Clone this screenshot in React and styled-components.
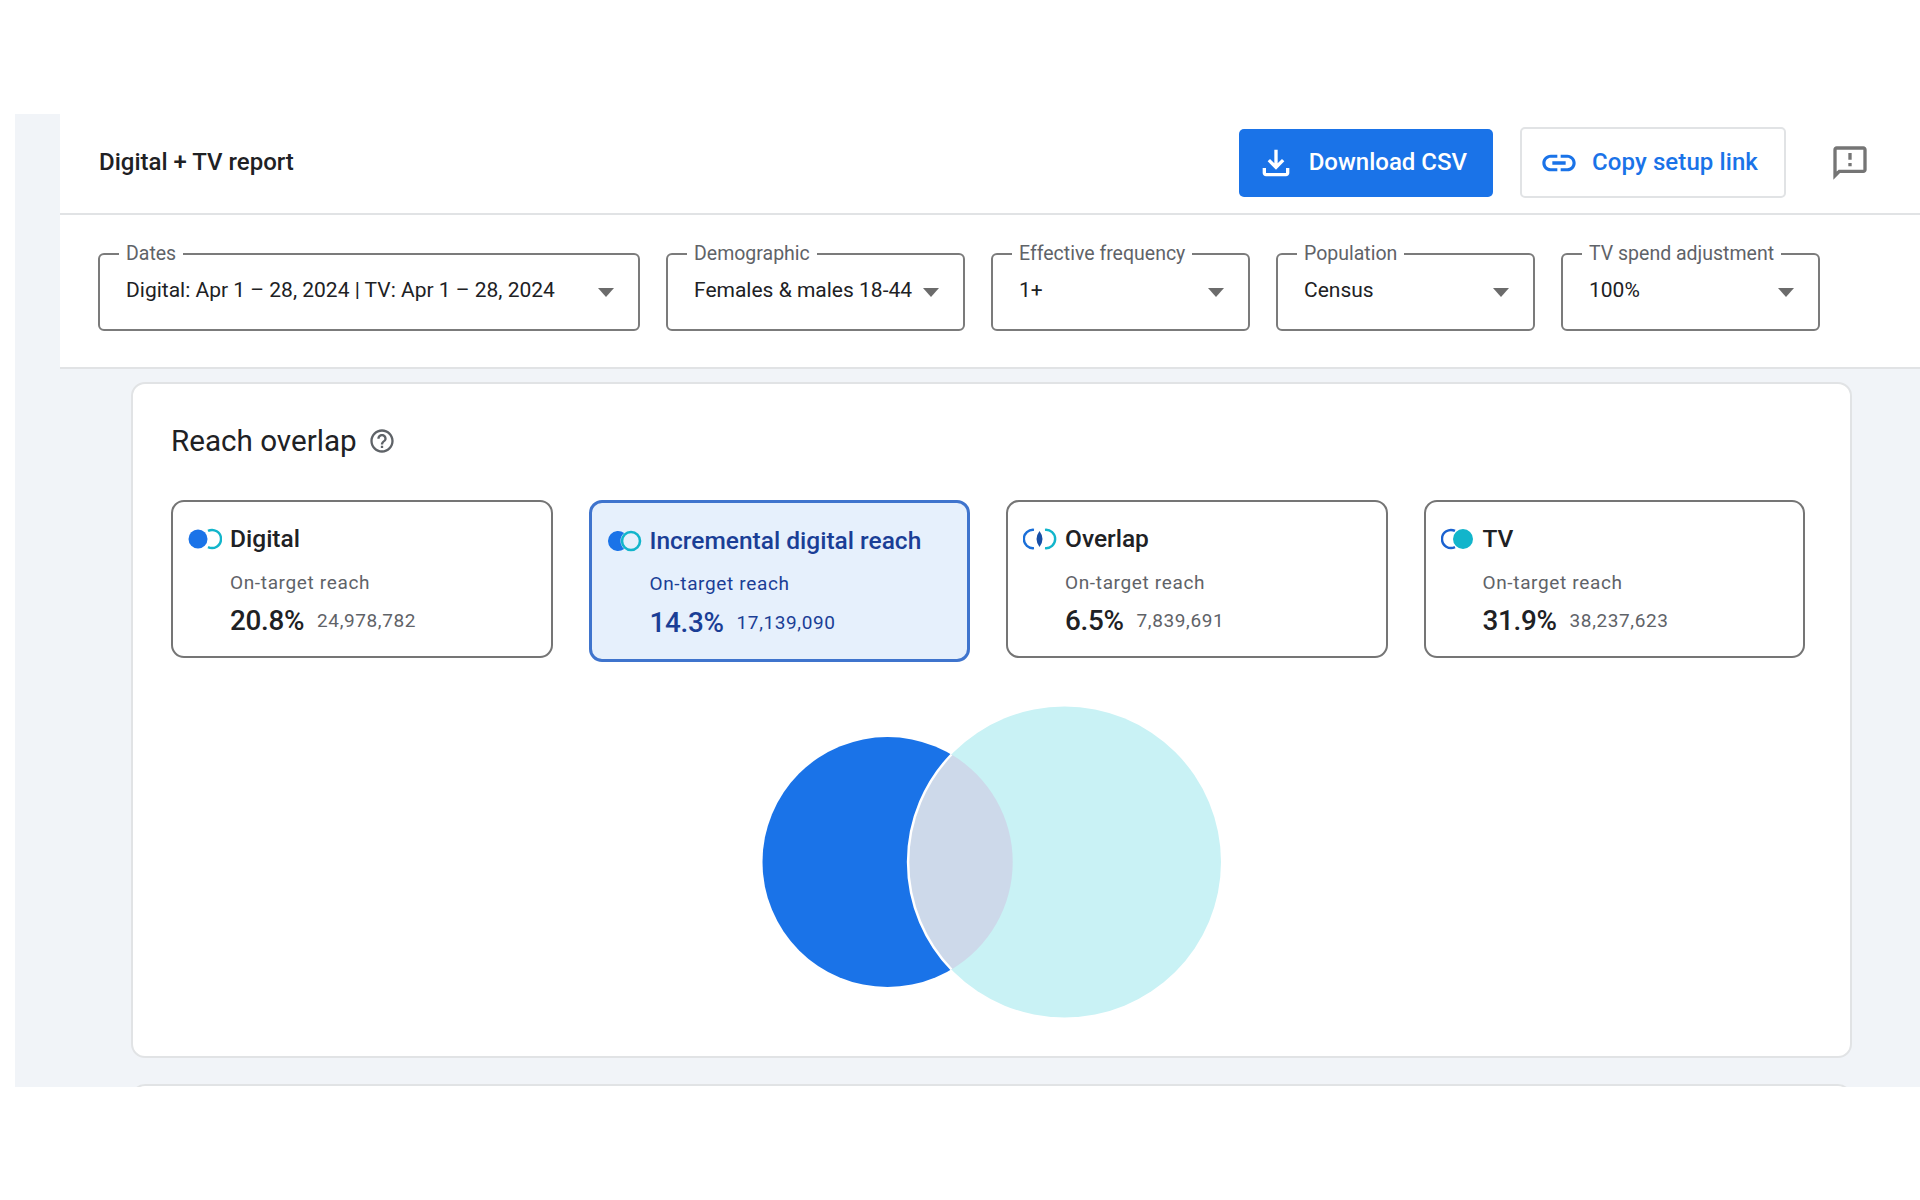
import React from "react";
import styled, { createGlobalStyle } from "styled-components";
import { MdHelpOutline, MdLink, MdOutlineFeedback, MdOutlineFileDownload } from "react-icons/md";

const filters = [
  { label: "Dates", value: "Digital: Apr 1 – 28, 2024 | TV: Apr 1 – 28, 2024", width: 542 },
  { label: "Demographic", value: "Females & males 18-44", width: 299 },
  { label: "Effective frequency", value: "1+", width: 259 },
  { label: "Population", value: "Census", width: 259 },
  { label: "TV spend adjustment", value: "100%", width: 259 },
];

const tiles = [
  { kind: "digital", title: "Digital", percent: "20.8%", count: "24,978,782" },
  { kind: "incremental", title: "Incremental digital reach", percent: "14.3%", count: "17,139,090", selected: true },
  { kind: "overlap", title: "Overlap", percent: "6.5%", count: "7,839,691" },
  { kind: "tv", title: "TV", percent: "31.9%", count: "38,237,623" },
];

function TileIcon({ kind }) {
  return (
    <svg width="34" height="22" viewBox="0 0 34 22" fill="none">
      {kind === "digital" && (
        <>
          <circle cx="10" cy="11" r="9.5" fill="#1a73e8" />
          <path d="M20 2.94A9 9 0 1 1 20 19.06" stroke="#12b5cb" strokeWidth="2.4" />
        </>
      )}
      {kind === "incremental" && (
        <>
          <path d="M16.1 3.08A10 10 0 1 0 16.1 18.92A10.5 10.5 0 0 1 16.1 3.08Z" fill="#1a73e8" />
          <circle cx="23" cy="11" r="9" stroke="#12b5cb" strokeWidth="2.6" />
        </>
      )}
      {kind === "overlap" && (
        <>
          <path d="M11 1.85A9.2 9.2 0 1 0 11 20.15" stroke="#1a6fd8" strokeWidth="2.4" />
          <path d="M22 1.85A9.2 9.2 0 1 1 22 20.15" stroke="#12b5cb" strokeWidth="2.4" />
          <path d="M16.5 3Q22.5 11 16.5 19Q10.5 11 16.5 3Z" fill="#174ea6" />
        </>
      )}
      {kind === "tv" && (
        <>
          <path d="M14 2.94A9 9 0 1 0 14 19.06" stroke="#1a62d0" strokeWidth="2.4" />
          <circle cx="22" cy="11" r="10" fill="#12b5cb" />
        </>
      )}
    </svg>
  );
}

function App() {
  return (
    <>
      <GlobalStyle />
      <Page>
        <Shell>
          <TopPanel>
            <Header>
              <ReportTitle>Digital + TV report</ReportTitle>
              <DownloadButton>
                <MdOutlineFileDownload size={40} />
                <ButtonText>Download CSV</ButtonText>
              </DownloadButton>
              <CopyButton>
                <MdLink size={40} />
                <ButtonText>Copy setup link</ButtonText>
              </CopyButton>
              <FeedbackButton>
                <MdOutlineFeedback size={40} />
              </FeedbackButton>
            </Header>
            <FilterBar>
              {filters.map(f => (
                <Filter key={f.label} $width={f.width}>
                  <FilterLabel>{f.label}</FilterLabel>
                  <FilterRow>
                    <FilterValue>{f.value}</FilterValue>
                    <Caret />
                  </FilterRow>
                </Filter>
              ))}
            </FilterBar>
          </TopPanel>
          <Card>
            <CardHeading>
              <CardTitle>Reach overlap</CardTitle>
              <MdHelpOutline size={28} color="#5f6368" />
            </CardHeading>
            <TileGrid>
              {tiles.map(t => (
                <Tile key={t.kind} $selected={t.selected}>
                  <TileIconCell>
                    <TileIcon kind={t.kind} />
                  </TileIconCell>
                  <div>
                    <TileTitle $selected={t.selected}>{t.title}</TileTitle>
                    <TileSub $selected={t.selected}>On-target reach</TileSub>
                    <TileStats $selected={t.selected}>
                      <Percent $selected={t.selected}>{t.percent}</Percent>
                      <Count $selected={t.selected}>{t.count}</Count>
                    </TileStats>
                  </div>
                </Tile>
              ))}
            </TileGrid>
            <Venn width="460" height="312" viewBox="0 0 460 312">
              <circle cx="125.5" cy="156" r="125" fill="#1a73e8" />
              <ellipse cx="302.5" cy="156" rx="156.5" ry="155.5" fill="#c9f2f5" />
              <path d="M189.5 48.5A125 125 0 0 1 189.5 263.5A156.5 155.5 0 0 1 189.5 48.5Z" fill="#cdd9ea" />
              <path d="M189.5 48.5A156.5 155.5 0 0 0 189.5 263.5" stroke="#fff" strokeWidth="2.5" fill="none" />
            </Venn>
          </Card>
          <NextCard />
        </Shell>
      </Page>
    </>
  );
}

export default App;

const GlobalStyle = createGlobalStyle`
  body {
    margin: 0;
    background: #fff;
    font-family: Roboto, "Liberation Sans", sans-serif;
    color: #202124;
  }
`;
const Page = styled.div`
  height: 1200px;
  padding: 114px 0 0 15px;
  box-sizing: border-box;
  overflow: hidden;
`;
const Shell = styled.div`
  height: 973px;
  overflow: hidden;
  background: #f1f4f8;
`;
const TopPanel = styled.div`
  margin-left: 45px;
  background: #fff;
  border-bottom: 2px solid #e1e3e5;
`;
const Header = styled.div`
  display: flex;
  align-items: center;
  height: 97px;
  padding: 0 50px 2px 39px;
  border-bottom: 2px solid #e1e3e5;
`;
const ReportTitle = styled.div`
  margin: 0 auto 2px 0;
  font-size: 24px;
  font-weight: 500;
`;
const DownloadButton = styled.button`
  display: flex;
  align-items: center;
  gap: 13px;
  height: 68px;
  padding: 0 26px 0 17px;
  border: none;
  border-radius: 5px;
  background: #1a73e8;
  color: #fff;
  font-family: inherit;
  font-size: 24px;
  font-weight: 500;
`;
const CopyButton = styled.button`
  display: flex;
  align-items: center;
  gap: 13px;
  height: 71px;
  margin-left: 27px;
  padding: 0 26px 0 17px;
  border: 2px solid #e1e3e5;
  border-radius: 5px;
  background: #fff;
  color: #1a73e8;
  font-family: inherit;
  font-size: 24px;
  font-weight: 500;
  letter-spacing: 0.1px;
`;
const ButtonText = styled.span`
  margin-bottom: 2px;
`;
const FeedbackButton = styled.div`
  display: flex;
  margin-left: 44px;
  color: #757575;
`;
const FilterBar = styled.div`
  display: flex;
  gap: 26px;
  padding: 27px 0 36px 38px;
`;
const Filter = styled.fieldset`
  box-sizing: border-box;
  width: ${props => props.$width}px;
  height: 89px;
  margin: 0;
  padding: 0 24px 0 26px;
  border: 2px solid #7b7b7b;
  border-radius: 6px;
`;
const FilterLabel = styled.legend`
  margin-left: -7px;
  padding: 0 7px;
  color: #5f6368;
  font-size: 19.5px;
  line-height: 24px;
`;
const FilterRow = styled.div`
  display: flex;
  align-items: center;
  justify-content: space-between;
  margin-top: 11px;
`;
const FilterValue = styled.div`
  color: #202124;
  font-size: 21px;
  line-height: 26px;
  white-space: nowrap;
`;
const Caret = styled.span`
  flex-shrink: 0;
  width: 0;
  height: 0;
  margin-top: 5px;
  border-top: 9px solid #6b6b6b;
  border-left: 8px solid transparent;
  border-right: 8px solid transparent;
`;
const Card = styled.section`
  box-sizing: border-box;
  margin: 13px 68px 0 116px;
  padding: 37px 38px 38px;
  border: 2px solid #e1e3e5;
  border-radius: 14px;
  background: #fff;
`;
const NextCard = styled(Card)`
  margin-top: 26px;
  height: 60px;
`;
const CardHeading = styled.div`
  display: flex;
  align-items: center;
  gap: 11px;
  height: 40px;
`;
const CardTitle = styled.h2`
  margin: 0;
  font-size: 29.6px;
  font-weight: 400;
`;
const TileGrid = styled.div`
  display: grid;
  grid-template-columns: repeat(4, 381.5px);
  gap: 36px;
  align-items: start;
  margin-top: 39px;
`;
const Tile = styled.div`
  box-sizing: border-box;
  display: grid;
  grid-template-columns: 42px 1fr;
  height: ${props => (props.$selected ? "162px" : "158px")};
  padding: ${props => (props.$selected ? "23px 16px 0" : "22px 15px 0")};
  border: ${props => (props.$selected ? "3px solid #3f74cd" : "2px solid #757575")};
  border-radius: 13px;
  background: ${props => (props.$selected ? "#e6f0fc" : "#fff")};
`;
const TileIconCell = styled.div`
  display: flex;
  align-items: center;
  height: 30px;
`;
const TileTitle = styled.div`
  color: ${props => (props.$selected ? "#1a3e96" : "#202124")};
  font-size: 24.5px;
  font-weight: 500;
  line-height: 30px;
  white-space: nowrap;
`;
const TileSub = styled.div`
  margin-top: ${props => (props.$selected ? "14.5px" : "16px")};
  color: ${props => (props.$selected ? "#1a3e96" : "#5f6368")};
  font-size: 19px;
  line-height: 26px;
  letter-spacing: 0.65px;
`;
const TileStats = styled.div`
  display: flex;
  align-items: center;
  gap: 13px;
  margin-top: ${props => (props.$selected ? "9px" : "8px")};
  line-height: 34px;
`;
const Percent = styled.span`
  color: ${props => (props.$selected ? "#1a3e96" : "#202124")};
  font-size: 27.8px;
  font-weight: 500;
  letter-spacing: -0.3px;
`;
const Count = styled.span`
  color: ${props => (props.$selected ? "#1a3e96" : "#5f6368")};
  font-size: 19px;
  letter-spacing: 0.6px;
`;
const Venn = styled.svg`
  display: block;
  margin: 44px auto 0;
  overflow: visible;
`;
